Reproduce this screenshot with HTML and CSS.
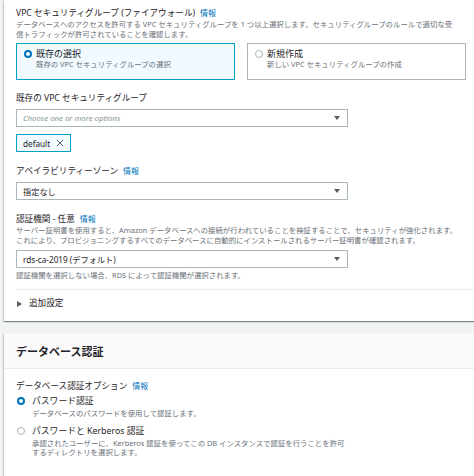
FILE: index.html
```html
<!DOCTYPE html>
<html lang="ja">
<head>
<meta charset="utf-8">
<link rel="stylesheet" href="styles.css">
</head>
<body>
<div class="page">
  <section class="card card-top">
    <div class="label">VPC セキュリティグループ (ファイアウォール)<span class="info">情報</span></div>
    <div class="desc">データベースへのアクセスを許可する VPC セキュリティグループを 1 つ以上選択します。セキュリティグループのルールで適切な受<br>信トラフィックが許可されていることを確認します。</div>
    <div class="tiles">
      <div class="tile selected">
        <span class="radio on"></span>
        <div class="tile-text">
          <div class="tile-title">既存の選択</div>
          <div class="tile-sub">既存の VPC セキュリティグループの選択</div>
        </div>
      </div>
      <div class="tile">
        <span class="radio"></span>
        <div class="tile-text">
          <div class="tile-title">新規作成</div>
          <div class="tile-sub">新しい VPC セキュリティグループの作成</div>
        </div>
      </div>
    </div>

    <div class="label field">既存の VPC セキュリティグループ</div>
    <div class="select"><span class="placeholder">Choose one or more options</span><span class="caret"></span></div>
    <div class="token"><span>default</span><svg class="x" viewBox="0 0 10 10" width="8" height="8"><path d="M1 1L9 9M9 1L1 9" stroke="#545b64" stroke-width="1.2" fill="none"/></svg></div>

    <div class="label field">アベイラビリティーゾーン<span class="info">情報</span></div>
    <div class="select"><span>指定なし</span><span class="caret"></span></div>

    <div class="label field">認証機関 - 任意<span class="info">情報</span></div>
    <div class="desc">サーバー証明書を使用すると、Amazon データベースへの接続が行われていることを検証することで、セキュリティが強化されます。<br>これにより、プロビジョニングするすべてのデータベースに自動的にインストールされるサーバー証明書が確認されます。</div>
    <div class="select sel-ca"><span>rds-ca-2019 (デフォルト)</span><span class="caret"></span></div>
    <div class="desc hint">認証機関を選択しない場合、RDS によって認証機関が選択されます。</div>

    <div class="divider"></div>
    <div class="expander"><span class="tri"></span><span>追加設定</span></div>
  </section>

  <section class="card card-auth">
    <div class="card-head">データベース認証</div>
    <div class="card-body">
      <div class="label">データベース認証オプション<span class="info">情報</span></div>
      <div class="option opt1">
        <span class="radio on"></span>
        <div>
          <div class="opt-title">パスワード認証</div>
          <div class="desc opt-desc">データベースのパスワードを使用して認証します。</div>
        </div>
      </div>
      <div class="option opt2">
        <span class="radio"></span>
        <div>
          <div class="opt-title">パスワードと Kerberos 認証</div>
          <div class="desc opt-desc">承認されたユーザーに、Kerberos 認証を使ってこの DB インスタンスで認証を行うことを許可<br>するディレクトリを選択します。</div>
        </div>
      </div>
    </div>
  </section>
</div>
</body>
</html>
```
FILE: styles.css
```css
html, body {
  margin: 0;
  padding: 0;
  background: #f2f3f3;
  overflow: hidden;
}
body {
  font-family: "Noto Sans", "Noto Sans CJK JP", sans-serif;
  color: #1f2328;
  width: 474px;
  height: 476px;
}
.page {
  padding-left: 4px;
  width: 490px;
}
.card {
  background: #fff;
  box-shadow: 0 1px 1px 0 rgba(0, 28, 36, 0.3), 1px 1px 1px 0 rgba(0, 28, 36, 0.15), -1px 1px 1px 0 rgba(0, 28, 36, 0.15);
}
.card-top {
  padding: 6px 18px 11px 12px;
}
.label {
  font-size: 8.6px;
  line-height: 13px;
  white-space: nowrap;
}
.info {
  color: #0073bb;
  margin-left: 5px;
  font-size: 8px;
}
.desc {
  font-size: 7.4px;
  line-height: 9.6px;
  color: #687078;
  white-space: nowrap;
}
.tiles {
  display: grid;
  grid-template-columns: 219px 219px;
  column-gap: 12px;
  margin-top: 4px;
}
.tile {
  display: flex;
  align-items: flex-start;
  height: 37px;
  box-sizing: border-box;
  border: 1px solid #aab7b8;
  padding: 4px 8px 0 7px;
}
.tile.selected {
  border-color: #00a1c9;
  background: #f1faff;
}
.radio {
  flex: none;
  width: 8px;
  height: 8px;
  box-sizing: border-box;
  border-radius: 50%;
  border: 1px solid #aab7b8;
  background: #fff;
  margin-top: 2px;
}
.radio.on {
  border: 2.4px solid #0073bb;
}
.tile-text {
  margin-left: 4px;
}
.tile-title {
  font-size: 9px;
  line-height: 12px;
}
.tile-sub {
  font-size: 7.4px;
  line-height: 9.6px;
  color: #687078;
  white-space: nowrap;
}
.field {
  margin-top: 12px;
}
.select {
  display: flex;
  align-items: center;
  justify-content: space-between;
  width: 332px;
  height: 18px;
  box-sizing: border-box;
  border: 1px solid #aab7b8;
  margin-top: 4px;
  padding: 0 7px 0 6px;
  font-size: 8.2px;
  background: #fff;
}
.sel-ca {
  margin-top: 4.5px;
}
.placeholder {
  color: #879596;
  font-style: italic;
  font-size: 7.8px;
}
.caret {
  width: 0;
  height: 0;
  border-left: 3px solid transparent;
  border-right: 3px solid transparent;
  border-top: 4px solid #545b64;
}
.token {
  display: inline-flex;
  align-items: center;
  gap: 6px;
  height: 18px;
  box-sizing: border-box;
  margin-top: 7px;
  padding: 0 6px 0 6px;
  border: 1px solid #00a1c9;
  background: #f1faff;
  font-size: 8.2px;
}
.token .x {
  display: block;
}
.hint {
  margin-top: 3px;
}
.divider {
  height: 1px;
  background: #eaeded;
  margin-top: 8.5px;
}
.expander {
  display: flex;
  align-items: center;
  margin-top: 7.5px;
  font-size: 8.6px;
  line-height: 13px;
}
.tri {
  width: 0;
  height: 0;
  border-top: 3px solid transparent;
  border-bottom: 3px solid transparent;
  border-left: 5px solid #545b64;
  margin: 0 7px 0 1px;
}
.card-auth {
  margin-top: 12px;
  height: 146px;
}
.card-head {
  height: 36px;
  box-sizing: border-box;
  border-bottom: 1px solid #eaeded;
  background: #fafafa;
  padding-left: 12px;
  display: flex;
  align-items: center;
  font-size: 11px;
  font-weight: bold;
}
.card-body {
  padding: 9.5px 12px 0 12px;
}
.option {
  display: flex;
  align-items: flex-start;
}
.option .radio {
  margin: 2.5px 7.5px 0 0.5px;
}
.opt1 {
  margin-top: 2px;
}
.opt2 {
  margin-top: 6px;
}
.opt-title {
  font-size: 8.8px;
  line-height: 13px;
  white-space: nowrap;
}
.opt-desc {
  margin-top: 1px;
}
```
